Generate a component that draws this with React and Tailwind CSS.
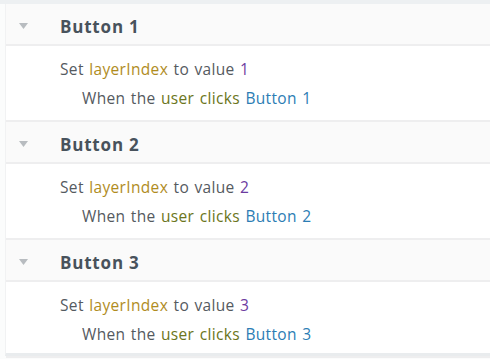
export default function App() {
  const items = [1, 2, 3];
  return (
    <div
      className="w-[490px] h-[359px] bg-[#fbfcfc] border-t-[4px] border-[#edf0f2] overflow-hidden"
      style={{ fontFamily: '"Open Sans", "Noto Sans", sans-serif' }}
    >
      <div className="ml-[5px] bg-white h-[352px] border-l border-[#f1f2f3] border-b-[3px] border-b-[#e9ecee]">
        {items.map((n) => (
          <div key={n}>
            <div className="h-[42px] bg-[#fafafa] border-b-[2px] border-[#eeeeef] flex items-center pt-[4px]">
              <svg width="9" height="6" viewBox="0 0 9 6" className="ml-[13px] mr-[32px]">
                <polygon points="0,0 9,0 4.5,6" fill="#b8bcc0" />
              </svg>
              <span className="text-[17px] font-bold text-[#48525c] tracking-[0.8px] leading-none">
                Button {n}
              </span>
            </div>
            <div className="h-[76px] border-b-[2px] border-[#eeeeef] pt-[9px] text-[15.5px] leading-[29px] tracking-[0.35px] [word-spacing:1px] text-[#555a5f]">
              <div className="pl-[54px]">
                Set <span className="text-[#b08c1e]">layerIndex</span> to value{" "}
                <span className="text-[#6c3b9f]">{n}</span>
              </div>
              <div className="pl-[76px]">
                When the <span className="text-[#6b7520]">user clicks</span>{" "}
                <span className="text-[#2c7db4]">Button {n}</span>
              </div>
            </div>
          </div>
        ))}
      </div>
    </div>
  );
}
